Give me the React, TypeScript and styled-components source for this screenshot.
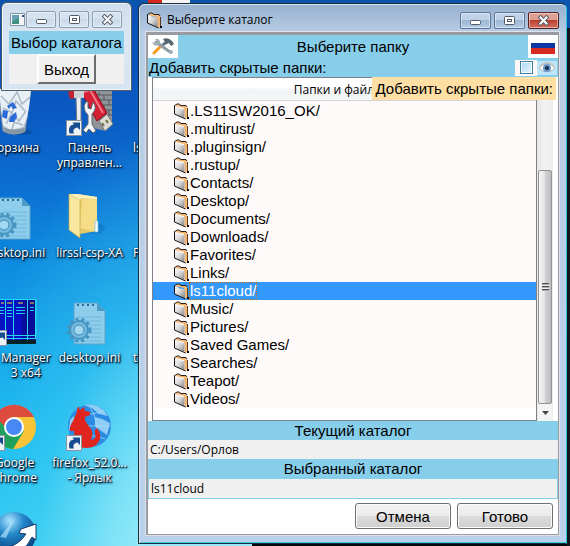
import React, { useState } from "react";
import styled, { createGlobalStyle, css } from "styled-components";

const sky = "#87ceeb";
const arial = `"Liberation Sans", Arial, sans-serif`;
const ui = `"Open Sans", "Noto Sans", sans-serif`;

const GlobalStyle = createGlobalStyle`
  * { box-sizing: border-box; }
  body { margin: 0; overflow: hidden; font-family: ${arial}; font-size: 15px; color: #000; }
  button, input { font: inherit; color: inherit; margin: 0; }
  svg { display: block; flex: none; }
`;

const Desktop = styled.main`
  position: relative;
  height: 100vh;
  overflow: hidden;
  background:
    linear-gradient(180deg, #0b55ad 0 28px, #101418 28px) right / 3px 100% no-repeat,
    linear-gradient(90deg, #9be9f8 0 114px, #05080a 114px) bottom right / calc(100% - 138px) 3px no-repeat,
    linear-gradient(90deg, transparent 148px, #d8281e 148px 162px, #f4f4f4 162px 190px, transparent 190px) top / 100% 3px no-repeat,
    linear-gradient(90deg, #0b55ad, #0b55ad) top / 100% 5px no-repeat,
    radial-gradient(ellipse 240px 480px at 190px 600px, #b4f1fa 0%, rgba(140, 231, 248, 0.85) 35%, rgba(70, 208, 244, 0.45) 65%, rgba(30, 170, 235, 0) 100%),
    linear-gradient(176deg, #0a50b4 0, #0a58c0 110px, #0c70d2 190px, #0e8ee0 270px, #12a6ea 360px, #1cbcf0 450px, #38cdf3 546px);
`;

const IconGrid = styled.div`
  display: grid;
  grid-auto-flow: column;
  grid-template-columns: repeat(3, 75px);
  grid-template-rows: repeat(5, 105px);
  margin: 87px 0 0 -23px;
`;

const Shortcut = styled.div<{ $start?: number }>`
  display: flex;
  flex-direction: column;
  gap: 3px;
  align-items: ${(p) => (p.$start ? "flex-start" : "center")};
  padding-left: ${(p) => p.$start ?? 0}px;
`;

const ShortcutArt = styled.svg.attrs({ width: 47, height: 50, viewBox: "0 0 47 50", "aria-hidden": true })<{ $pulled?: boolean }>`
  ${(p) => p.$pulled && css`margin-left: -10px;`}
`;

const ShortcutText = styled.span`
  font: 12px/15px ${ui};
  color: #fff;
  text-align: center;
  white-space: pre;
  text-shadow: 1px 1px 2px #001a33, 0 1px 3px #00203c, 1px 1px 1px #001a33;
`;

const WindowFrame = styled.section<{ $main?: boolean }>`
  position: absolute;
  display: flex;
  flex-direction: column;
  ${(p) =>
    p.$main
      ? css`
          top: 3px;
          right: 3px;
          bottom: 2px;
          left: 138px;
          padding: 0 6px 7px;
          border: 1px solid #18303c;
          border-right-color: #2fc4dc;
          border-radius: 6px 6px 0 0;
          background: linear-gradient(180deg, #96b0cf 0, #b9cee5 30px, #b9d1ea 100%);
          box-shadow: inset 0 1px #d7e5f2, inset 1px 0 #cfe3f2, inset 0 -1px #3ccbe0;
        `
      : css`
          top: 2px;
          left: 1px;
          width: 131px;
          padding: 0 7px 6px;
          border: 1px solid #525b65;
          border-radius: 6px 6px 0 0;
          background: linear-gradient(180deg, #cfdeed, #dce7f3 40px, #d7e4f2);
          box-shadow: inset 0 0 0 1px #edf4fa;
        `}
`;

const TitleBar = styled.header<{ $main?: boolean }>`
  display: flex;
  align-items: center;
  flex: none;
  height: 28px;
  padding: ${(p) => (p.$main ? "4px 1px 0 1px" : "4px 3px 0 1px")};
  gap: ${(p) => (p.$main ? 4 : 1)}px;
`;

const Title = styled.h1`
  flex: 1;
  margin: 0;
  font: 12px/16px ${ui};
`;

const Captions = styled.div`
  display: flex;
  gap: 3px;
  margin-left: auto;
`;

const CaptionButton = styled.button<{ $tone?: "blue" | "red" }>`
  display: grid;
  place-items: center;
  width: ${(p) => (p.$tone ? 31 : 30)}px;
  height: 17px;
  padding: 0;
  border: 1px solid ${(p) => (p.$tone === "red" ? "#56202a" : p.$tone ? "#5a7595" : "#8b9db4")};
  border-radius: 2px;
  box-shadow: inset 0 0 0 1px rgba(255, 255, 255, 0.45);
  background: ${(p) =>
    p.$tone === "red"
      ? "linear-gradient(180deg, #dfa093 0 45%, #bd3f2b 50%, #d07361)"
      : p.$tone
        ? "linear-gradient(180deg, #bfd2e7 0 45%, #9db8d5 50%, #b4cce3)"
        : "linear-gradient(180deg, #d5e2ef 0 45%, #c9d9e9 50%, #d6e4f1)"};
`;

const SmallLabel = styled.h2`
  margin: 0;
  background: ${sky};
  font: 15px/23px ${arial};
  text-align: center;
  white-space: nowrap;
`;

const SmallBody = styled.div`
  display: flex;
  justify-content: center;
  height: 30px;
  background: #f0f0f0;
`;

const ExitButton = styled.button`
  width: 59px;
  padding: 0;
  border: 2px solid;
  border-color: #fff #6d6d6d #6d6d6d #fff;
  background: #f0f0f0;
`;

const Client = styled.div`
  display: flex;
  flex: 1;
  flex-direction: column;
  min-height: 0;
  border: 1px solid #8e959c;
  border-width: 3px 1px 1px 2px;
  border-color: #989ca2;
  outline: 1px solid #dde3e8;
  background: #fff;
  margin: 0 1px 1px;
`;

const HeadRow = styled.div`
  display: flex;
  flex: none;
  align-items: center;
  height: 23px;
  background: ${sky};
`;

const HeadTitle = styled.h2`
  flex: 1;
  margin: 0;
  font: 15px/23px ${arial};
  text-align: center;
`;

const IconButton = styled.button`
  display: grid;
  place-items: center;
  align-self: stretch;
  width: 30px;
  padding: 0;
  border: 0;
  background: #fff;
`;

const HiddenRow = styled.div`
  display: flex;
  flex: none;
  align-items: center;
  height: 19px;
  padding: 0 1px;
  background: ${sky};
`;

const HiddenLabel = styled.label`
  flex: 1;
  line-height: 19px;
`;

const CheckCell = styled.span`
  display: grid;
  place-items: center;
  width: 22px;
  height: 16px;
  background: #fff7f8;
`;

const Check = styled.input`
  appearance: none;
  width: 13px;
  height: 13px;
  border: 1px solid #3f7f9f;
  box-shadow: inset 0 0 0 1px #f5fbff;
  background: linear-gradient(135deg, #a9d5ef, #e8f7ff);
`;

const EyeCell = styled.span`
  display: grid;
  place-items: center;
  width: 20px;
  height: 14px;
  background: #bfe5fb;
`;

const TreeArea = styled.div`
  position: relative;
  display: flex;
  flex: 1;
  min-height: 0;
  padding: 0 5px 0 4px;
`;

const Tree = styled.div`
  flex: 1;
  border: 1px solid #7e828a;
  overflow: hidden;
`;

const TreeHead = styled.div`
  height: 23px;
  padding-right: 12px;
  border-bottom: 1px solid #d3d5d9;
  background: linear-gradient(180deg, #fff 0 45%, #f3f4f6 50%, #f4f5f7);
  font: 12px/23px ${ui};
  text-align: center;
`;

const Rows = styled.ul`
  margin: 0;
  padding: 1px 0 0;
  list-style: none;
  background: #fffafa;
`;

const Row = styled.button<{ $selected: boolean }>`
  display: flex;
  align-items: center;
  width: 100%;
  height: 18px;
  padding: 0 0 0 20px;
  border: 0;
  text-align: left;
  background: ${(p) => (p.$selected ? "#3399ff" : "transparent")};
  color: ${(p) => (p.$selected ? "#fff" : "#000")};
`;

const RowName = styled.span<{ $selected: boolean }>`
  line-height: 16px;
  border: 1px ${(p) => (p.$selected ? "dotted #c46a20" : "solid transparent")};
  margin-left: -1px;
`;

const ScrollTrack = styled.div`
  display: flex;
  flex-direction: column;
  width: 16px;
  padding: 93px 1px 0;
  background: linear-gradient(90deg, #e6e6e6, #f3f3f3 50%, #ededed);
`;

const Thumb = styled.div`
  display: grid;
  place-items: center;
  flex: 1;
  border: 1px solid #929292;
  border-radius: 2px;
  background: linear-gradient(90deg, #f5f5f5, #e4e4e6 45%, #cfcfd2 55%, #bfbfc3);
`;

const Grip = styled.i`
  width: 7px;
  height: 8px;
  background: repeating-linear-gradient(180deg, #4d4d4d 0 1px, #aaa 1px 2px, #eee 2px 3px);
`;

const ArrowDown = styled.button`
  display: grid;
  place-items: center;
  height: 17px;
  padding: 0;
  border: 0;
  background: #f4f4f4;
`;

const Tooltip = styled.div`
  position: absolute;
  top: 0;
  right: 2px;
  padding: 0 3px;
  background: #ffdfa3;
  line-height: 23px;
  white-space: nowrap;
`;

const FieldLabel = styled.label`
  flex: none;
  background: ${sky};
  line-height: 19px;
  text-align: center;
`;

const PathInput = styled.input<{ $framed?: boolean }>`
  flex: none;
  width: 100%;
  height: ${(p) => (p.$framed ? 21 : 19)}px;
  padding: 0 2px;
  border: ${(p) => (p.$framed ? `1px solid ${sky}` : "0")};
  border-radius: 0;
  background: #f0f0f0;
  font: 12px/18px ${ui};
  outline: 0;
`;

const Actions = styled.footer`
  display: flex;
  flex: none;
  justify-content: flex-end;
  gap: 6px;
  padding: 4px 5px 5px;
`;

const ActionButton = styled.button`
  width: 96px;
  height: 26px;
  padding: 0;
  border: 1px solid #707070;
  border-radius: 3px;
  box-shadow: inset 0 0 0 1px #fbfbfb;
  background: linear-gradient(180deg, #f3f3f3 0, #ebebeb 50%, #dcdcdc 51%, #cfcfcf);
`;

const ArrowBadge = () => (
  <g>
    <rect x=".5" y="33.500" width="15" height="15" fill="#eef3f8" stroke="#8b949e" />
    <path d="M3.500 46.500C2 41 4 38 8 37.500L6.500 35.500H14V43L11.500 40.500C8 41 6.500 43 8 46.500Z" fill="#174c91" />
  </g>
);

const BinArt = () => (
  <ShortcutArt>
    <ellipse cx="27" cy="45" rx="14" ry="3" fill="#06356d" opacity=".4" />
    <path d="M7 2H40L34 44Q23 50 12 44Z" fill="#b9c6d3" stroke="#8193a5" />
    <path d="M8 2L40 2L38 20L36 31L32 40L20 43L12 38Z" fill="#e8eff5" />
    <path d="M10 9l8 8 8-12 5 12 8-7M12 21l9 5 4-12 9 10M15 37l6-11 7 8 7-10M21 43l2-8 9 3" fill="none" stroke="#a8b8c7" strokeWidth="1.500" />
    <path d="M16 19l6-4 4 6-4 1-2-3-2 3zM12 23l5 1-1 8-5-2zM19 30l6-5 1 5-3 5-5 0z" fill="#2a6bd8" />
    <path d="M12 40Q22 45 35 40L34 45Q23 50 13 45Z" fill="#8797a5" />
  </ShortcutArt>
);

const PanelArt = () => (
  <ShortcutArt>
    <path d="M24 2H46V36L40 44L22 40Z" fill="#8f9499" />
    <path d="M24 8H46M24 13H46M25 18H46M26 23H46M28 28H46M33 5v3M38 8v5M43 13v5M38 18v5M43 23v5" stroke="#55595e" />
    <path d="M15 5L27 1L41 26L31 34Z" fill="#d41f35" stroke="#8b0c1b" />
    <path d="M18 5L24 3L37 26" fill="none" stroke="#f27a85" strokeWidth="2" />
    <path d="M33 34L41 27L47 37L39 44Z" fill="#dcdcd4" stroke="#777" />
    <path d="M36 36l2 3M40 33l2 3" stroke="#6c6c45" strokeWidth="2" />
    <path d="M10 9H15L15 43H11Z" fill="#eceff1" stroke="#727980" />
    <path d="M2 5L10 2V11L4 12Z" fill="#c0252f" />
    <path d="M8 2H18V11H8Z" fill="#cdd2d5" />
    <path d="M18 19Q19 15 22 14V21L25 22L27 15Q32 21 26 27L26 37L30 44L27 46L23 42L20 46L17 43L22 37V28Q18 25 18 19Z" fill="#f1f3f4" stroke="#5e656b" />
    <ArrowBadge />
  </ShortcutArt>
);

const FolderArt = () => (
  <ShortcutArt>
    <path d="M18 41L34 42L40 35L32 30Z" fill="#063a73" opacity=".18" />
    <path d="M10 2L31 5V39L14 42Z" fill="#e6cb6b" />
    <path d="M16 7L31 5V40L14 36Z" fill="#f5dc86" />
    <path d="M3 2L14 8V46L3 38Z" fill="#f9e89f" stroke="#c9a843" strokeWidth=".700" />
    <path d="M3 2L12 2L31 5V7L15 6L14 8Z" fill="#fff0ba" />
    <path d="M29 29h3v11h-3z" fill="#fafdff" stroke="#79bfd8" strokeWidth=".700" />
  </ShortcutArt>
);

const IniArt = () => (
  <ShortcutArt>
    <path d="M8 6H31L39 14V47H8Z" fill="#8fcdec" stroke="#5aa2cc" />
    <path d="M31 6V14H39Z" fill="#4d9bc8" />
    <path d="M12 20H36M12 24H36M12 28H36M12 32H36M12 36H36M12 40H36M12 44H36" stroke="#6fb6da" />
    <path d="M11 8h2M16 8h2M21 8h2M26 8h2" stroke="#236e9d" strokeWidth="2" />
    <circle cx="13" cy="33" r="9" fill="#74b9de" stroke="#4594c1" strokeWidth="2" />
    <circle cx="13" cy="33" r="11" fill="none" stroke="#4594c1" strokeWidth="3" strokeDasharray="3 3" />
    <circle cx="13" cy="33" r="5" fill="#a2d9f0" stroke="#3d8bb8" />
  </ShortcutArt>
);

const CabinetArt = () => (
  <ShortcutArt $pulled>
    <path d="M0 3H45V44H0Z" fill="#0810c4" />
    <path d="M31 3H45V44H31Z" fill="#070d98" />
    <path d="M0 2.500H45V38.500H0M14.500 3V44M22.500 3V44M36.500 3V44M0 41.500H45M44.500 3V42" fill="none" stroke="#25d9f2" />
    <path d="M10 6h3M16 6h5M27 6h5M39 6h4" stroke="#f5df28" strokeWidth="1" />
    <path d="M9 10.500h4M16 10.500h5M25 10.500h9M39 10.500h4M9 13.500h4M16 13.500h5M25 13.500h9M39 13.500h4M9 16.500h4M16 16.500h5M25 16.500h9M16 19.500h5" stroke="#22cfe9" />
    <path d="M0 43H45V45H0ZM8 45h3v3H8zM15 45h30v2H15z" fill="#062225" />
    <ArrowBadge />
  </ShortcutArt>
);

const ChromeArt = () => (
  <ShortcutArt>
    <circle cx="23" cy="25" r="22" fill="#f7c437" />
    <path d="M23 25L4 14A22 22 0 0 0 22 47L33 29Z" fill="#1fa15d" />
    <path d="M4 14A22 22 0 0 1 43 15H22L14 25Z" fill="#dc4b3e" />
    <circle cx="23" cy="25" r="10" fill="#fff" />
    <circle cx="23" cy="25" r="8" fill="#4788f4" />
    <g transform="translate(-2 0)"><ArrowBadge /></g>
  </ShortcutArt>
);

const FirefoxArt = () => (
  <ShortcutArt>
    <circle cx="23.500" cy="24" r="21.500" fill="#2c8ce4" />
    <path d="M18 3Q34 0 42 14L33 12L26 6ZM29 15L36 17L44 21L41 33L34 28L29 24ZM4 18L8 14L10 24L3 29Z" fill="#8fcdf6" />
    <path d="M24 5Q34 20 30 43M3 24H45M10 9Q24 16 38 8M9 38Q24 30 39 37" fill="none" stroke="#a8dcfa" strokeWidth=".700" />
    <path d="M12 4L14 8L18 5L19 9L24 10L24 13L19 15Q18 18 22 23Q29 30 25 38Q31 37 29 31Q28 28 31 26Q37 34 32 41Q26 48 14 45L7 38Q9 32 8 29L4 29Q3 25 7 19Q11 12 12 4Z" fill="#df251d" />
    <ArrowBadge />
  </ShortcutArt>
);

const GlobeArt = () => (
  <ShortcutArt>
    <defs>
      <radialGradient id="ball" cx=".4" cy=".2" r=".9">
        <stop offset="0" stopColor="#a8e4ff" />
        <stop offset=".35" stopColor="#2388ca" />
        <stop offset="1" stopColor="#022d6c" />
      </radialGradient>
    </defs>
    <circle cx="23" cy="27" r="22" fill="url(#ball)" />
    <path d="M9 30L24 11L15 31Z" fill="#b7e5fa" opacity=".65" />
    <path d="M9 42Q27 40 35 27L28 26L30 22L45 17V33L41 30Q34 46 14 50Z" fill="#fff" stroke="#183d68" />
  </ShortcutArt>
);

const FolderGlyph = () => (
  <svg width="17" height="17" viewBox="0 0 17 17" aria-hidden="true">
    <defs>
      <linearGradient id="flap" x1="0" y1="0" x2="1" y2="1">
        <stop offset="0" stopColor="#fff" />
        <stop offset=".5" stopColor="#d6d6d6" />
        <stop offset="1" stopColor="#808080" />
      </linearGradient>
    </defs>
    <path d="M2 3L5 1L8 2L13 3L14 5V15L12 16L11 5Z" fill="#f5b672" />
    <path d="M1 3L4 1L6 1L8 2.500L13 2.500L14 4" fill="none" stroke="#222" />
    <path d="M1.500 3L5 4L6.500 5.500L11.500 6V15L1.500 11Z" fill="url(#flap)" />
    <path d="M1.500 3V11L12.500 16" fill="none" stroke="#111" />
    <path d="M14.500 5V15" stroke="#5a3a1e" strokeWidth="1" />
    <path d="M14 14h2v2h-2z" />
  </svg>
);

const CaptionGlyph = ({ kind }: { kind: "min" | "max" | "close" }) => (
  <svg width="13" height="11" viewBox="0 0 13 11" aria-hidden="true">
    {kind === "min" && <rect x="1.500" y="5.500" width="10" height="4" rx="1" fill="#fff" stroke="#545b68" />}
    {kind === "max" && (
      <g fill="#fff" stroke="#545b68">
        <rect x="1.500" y="1.500" width="10" height="8" rx="1" />
        <rect x="4.500" y="4.500" width="4" height="2" />
      </g>
    )}
    {kind === "close" && (
      <g fill="none" strokeLinecap="square">
        <path d="M3.500 2.500L9.500 8.500M9.500 2.500L3.500 8.500" stroke="#545b68" strokeWidth="4" />
        <path d="M3.500 2.500L9.500 8.500M9.500 2.500L3.500 8.500" stroke="#fff" strokeWidth="2" />
      </g>
    )}
  </svg>
);

const AppGlyph = () => (
  <svg width="15" height="13" viewBox="0 0 15 13" aria-hidden="true">
    <path d="M.5 .5H14.500V12.500H.5Z" fill="#f4f7f9" stroke="#8896a2" />
    <path d="M2 2H9V11H2Z" fill="#3f927f" />
    <path d="M2 2H9V5L2 9Z" fill="#659fb7" />
    <path d="M12 2h2v2h-2z" fill="#334f8c" />
  </svg>
);

const ToolsGlyph = () => (
  <svg width="24" height="17" viewBox="0 0 24 17" aria-hidden="true">
    <path d="M3 15L10 8" stroke="#f89b24" strokeWidth="3" strokeLinecap="round" />
    <path d="M10 8L16 4" stroke="#68757d" strokeWidth="3" />
    <path d="M12 1Q17-1 21 3L23 6L20 8L18 5L15 6Z" fill="#54656d" />
    <path d="M5 4L19 14" stroke="#8f9da7" strokeWidth="3" strokeLinecap="round" />
    <path d="M1 4L4 5L6 3L4 1Q9 0 9 5Q7 9 3 7Z" fill="#a2adb5" />
    <circle cx="20" cy="14" r="2" fill="#a2adb5" />
  </svg>
);

const FlagGlyph = () => (
  <svg width="24" height="15" viewBox="0 0 24 15" aria-label="Русский">
    <path d="M0 0H24V4H0Z" fill="#fff" />
    <path d="M0 4H24V9H0Z" fill="#0b37a5" />
    <path d="M0 9H24V15H0Z" fill="#d62b20" />
  </svg>
);

const EyeGlyph = () => (
  <svg width="18" height="12" viewBox="0 0 18 12" aria-hidden="true">
    <path d="M1 6Q9-3 17 6Q9 14 1 6Z" fill="#fff" stroke="#b5b6b9" />
    <circle cx="9" cy="6" r="4" fill="#6997ca" />
    <circle cx="9" cy="6" r="2" fill="#172a4c" />
    <path d="M2 4Q9-3 16 4" fill="none" stroke="#c5b8a4" />
  </svg>
);

const WindowButtons = ({ main }: { main?: boolean }) => (
  <Captions>
    <CaptionButton $tone={main ? "blue" : undefined} aria-label="Свернуть"><CaptionGlyph kind="min" /></CaptionButton>
    <CaptionButton $tone={main ? "blue" : undefined} aria-label="Развернуть"><CaptionGlyph kind="max" /></CaptionButton>
    <CaptionButton $tone={main ? "red" : undefined} aria-label="Закрыть"><CaptionGlyph kind="close" /></CaptionButton>
  </Captions>
);

const folders = [
  ".LS11SW2016_OK/", ".multirust/", ".pluginsign/", ".rustup/", "Contacts/", "Desktop/",
  "Documents/", "Downloads/", "Favorites/", "Links/", "ls11cloud/", "Music/", "Pictures/",
  "Saved Games/", "Searches/", "Teapot/", "Videos/",
];

export default function App() {
  const [selected, setSelected] = useState("ls11cloud/");
  return (
    <Desktop>
      <GlobalStyle />
      <IconGrid>
        <Shortcut><BinArt /><ShortcutText>Корзина</ShortcutText></Shortcut>
        <Shortcut><IniArt /><ShortcutText>desktop.ini</ShortcutText></Shortcut>
        <Shortcut $start={24}><CabinetArt /><ShortcutText>{"Manager\n3 x64"}</ShortcutText></Shortcut>
        <Shortcut><ChromeArt /><ShortcutText>{"Google\nChrome"}</ShortcutText></Shortcut>
        <Shortcut><GlobeArt /></Shortcut>
        <Shortcut><PanelArt /><ShortcutText>{"Панель\nуправлен..."}</ShortcutText></Shortcut>
        <Shortcut><FolderArt /><ShortcutText>lirssl-csp-XA</ShortcutText></Shortcut>
        <Shortcut><IniArt /><ShortcutText>desktop.ini</ShortcutText></Shortcut>
        <Shortcut><FirefoxArt /><ShortcutText>{"firefox_52.0...\n- Ярлык"}</ShortcutText></Shortcut>
        <Shortcut />
        <Shortcut $start={6}><ShortcutArt /><ShortcutText>ls</ShortcutText></Shortcut>
        <Shortcut $start={6}><ShortcutArt /><ShortcutText>P</ShortcutText></Shortcut>
        <Shortcut $start={6}><ShortcutArt /><ShortcutText>t</ShortcutText></Shortcut>
      </IconGrid>

      <WindowFrame>
        <TitleBar><AppGlyph /><WindowButtons /></TitleBar>
        <SmallLabel>Выбор каталога</SmallLabel>
        <SmallBody><ExitButton>Выход</ExitButton></SmallBody>
      </WindowFrame>

      <WindowFrame $main>
        <TitleBar $main><FolderGlyph /><Title>Выберите каталог</Title><WindowButtons main /></TitleBar>
        <Client>
          <HeadRow>
            <IconButton aria-label="Настройки"><ToolsGlyph /></IconButton>
            <HeadTitle>Выберите папку</HeadTitle>
            <IconButton aria-label="Язык"><FlagGlyph /></IconButton>
          </HeadRow>
          <HiddenRow>
            <HiddenLabel htmlFor="hidden-folders">Добавить скрытые папки:</HiddenLabel>
            <CheckCell><Check id="hidden-folders" type="checkbox" /></CheckCell>
            <EyeCell><EyeGlyph /></EyeCell>
          </HiddenRow>
          <TreeArea>
            <Tree>
              <TreeHead>Папки и файлы</TreeHead>
              <Rows>
                {folders.map((name) => (
                  <li key={name}>
                    <Row $selected={name === selected} onClick={() => setSelected(name)}>
                      <FolderGlyph />
                      <RowName $selected={name === selected}>{name}</RowName>
                    </Row>
                  </li>
                ))}
              </Rows>
            </Tree>
            <ScrollTrack>
              <Thumb><Grip /></Thumb>
              <ArrowDown aria-label="Вниз">
                <svg width="7" height="4" viewBox="0 0 7 4" aria-hidden="true"><path d="M0 0H7L3.500 4Z" fill="#444" /></svg>
              </ArrowDown>
            </ScrollTrack>
            <Tooltip role="tooltip">Добавить скрытые папки:</Tooltip>
          </TreeArea>
          <FieldLabel htmlFor="current">Текущий каталог</FieldLabel>
          <PathInput id="current" readOnly value="C:/Users/Орлов" />
          <FieldLabel htmlFor="chosen">Выбранный каталог</FieldLabel>
          <PathInput $framed id="chosen" readOnly value={selected.replace("/", "")} />
          <Actions>
            <ActionButton>Отмена</ActionButton>
            <ActionButton>Готово</ActionButton>
          </Actions>
        </Client>
      </WindowFrame>
    </Desktop>
  );
}
